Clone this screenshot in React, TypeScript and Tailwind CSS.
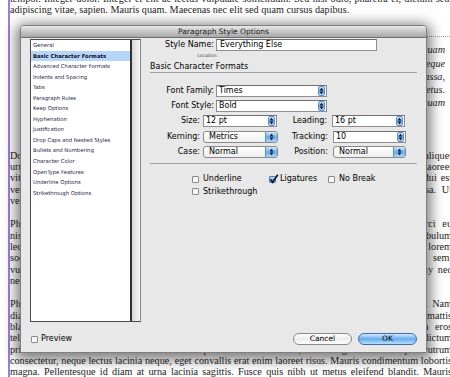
import React from "react";

const p0 = [
  "tempor. Integer dolor. Integer et elit ac lectus vulputate sollicitudin. Sed nisl odio, pharetra et, dictum sed,",
  "adipiscing vitae, sapien. Mauris quam. Maecenas nec elit sed quam cursus dapibus.",
];

const quote = [
  "Integer tincidunt ante sed lorem. Nulla facilisi. Sed ullamcorper lacus vel quam",
  "commodo, sit amet scelerisque lectus congue. Aenean condimentum felis sed neque",
  "Donec vitae felis. Aliquam vel lectus. Integer fringilla, urna in egestas massa,",
  "venenatis felis turpis sed ligula. Maecenas elementum porta lacus. Ut id metus.",
  "Quisque pharetra arcu sit amet orci. Nulla et tellus in nisl auctor aliquam quam",
];

const p1 = [
  "Donec ut est in lectus consequat consequat. Etiam eget dui. Aliquam erat volutpat. Sed at lorem aliquet",
  "urna nec lectus tincidunt dapibus. Praesent vel sapien sed dolor ultrices egestas vitae et laoreet",
  "vitae velit. Nam convallis tempus odio, eu fermentum risus vulputate ut. Suspendisse nec mollis dui est",
  "venenatis mi. In hac habitasse platea dictumst. Proin vel lorem ac tellus ornare feugiat massa. Ut",
  "vel nibh. Fusce sit amet diam.",
];

const p2 = [
  "Phasellus ultrices nulla quis nibh. Quisque a lectus. Donec consectetuer ligula vulputate orci eu",
  "nisi. Sed adipiscing ornare risus. Morbi est est, blandit sit amet, sagittis vel, euismod vestibulum",
  "lectus. Cras ornare tristique elit. Vivamus vestibulum nulla nec ante. Praesent placerat risus lorem",
  "sociis natoque penatibus et magnis dis parturient montes, nascetur ridiculus mus. Aliquam in sem,",
  "vulputate vitae, pretium mattis, nunc. Mauris eget neque at sem venenatis eleifend. Ut nonummy nec",
  "neque. Fusce mauris.",
];

const p3 = [
  "Phasellus pede arcu, dapibus eu, fermentum et, dapibus sed, urna. Morbi interdum mollis sapien. Nam",
  "diam. Sed vel erat. Curabitur non ipsum in dolor adipiscing semper. Praesent lacinia mauris mattis",
  "blandit dolor. Aliquam feugiat tortor vitae arcu. Vestibulum ante ipsum, suscipit et, fringilla eros",
  "tellus. Etiam ut sapien ac nisl accumsan feugiat. Aenean vel lorem quis dui tempus dictum",
  "primis in faucibus orci luctus et ultrices posuere cubilia curae; Nunc eget enim semper rutrum",
  "consectetur, neque lectus lacinia neque, eget convallis erat enim laoreet risus. Mauris condimentum lobortis",
  "magna. Pellentesque id diam at urna lacinia sagittis. Fusce quis nibh ut metus eleifend blandit. Mauris tempor",
];

const sections = [
  "General",
  "Basic Character Formats",
  "Advanced Character Formats",
  "Indents and Spacing",
  "Tabs",
  "Paragraph Rules",
  "Keep Options",
  "Hyphenation",
  "Justification",
  "Drop Caps and Nested Styles",
  "Bullets and Numbering",
  "Character Color",
  "OpenType Features",
  "Underline Options",
  "Strikethrough Options",
];

function Para({ lines, last = true }: { lines: string[]; last?: boolean }) {
  return (
    <>
      {lines.map((l, i) => (
        <div
          key={i}
          className={`h-[11.4px] overflow-hidden ${
            i < lines.length - 1 || !last ? "text-justify [text-align-last:justify]" : ""
          }`}
        >
          {l}
        </div>
      ))}
    </>
  );
}

function Page() {
  return (
    <div className="ml-[8px] w-[444px] border-l-2 border-[#9c80dc] font-['Liberation_Serif',serif] text-[10.2px] leading-[11.4px] text-[#1e1e1e]">
      <div className="-mt-[7px]">
        <Para lines={p0} />
      </div>
      <div className="mt-[27.6px] pl-[36px] pr-[7px] italic">
        {quote.map((l, i) => (
          <div key={i} className="h-[13.25px] leading-[13.25px] overflow-hidden text-justify [text-align-last:justify]">
            {l}
          </div>
        ))}
      </div>
      <div className="mt-[40px]">
        <Para lines={p1} />
      </div>
      <div className="mt-[11.6px]">
        <Para lines={p2} />
      </div>
      <div className="mt-[11.6px]">
        <Para lines={p3} last={false} />
      </div>
    </div>
  );
}

function Arrows() {
  return (
    <svg width="5" height="8" viewBox="0 0 5 8">
      <path d="M0.6 3.4L2.5 0.7L4.4 3.4Z M0.6 4.6L2.5 7.3L4.4 4.6Z" fill="#111" />
    </svg>
  );
}

function Menu({ value, w }: { value: string; w: string }) {
  return (
    <div className={`${w} h-[12px] flex items-center bg-white border border-[#8e8e8e] border-t-[#6f6f6f]`}>
      <span className="pl-[2px] flex-1 leading-none">{value}</span>
      <span className="mr-[1px] w-[7px] h-[10px] rounded-[2px] flex items-center justify-center bg-gradient-to-b from-[#d3e8fb] via-[#6aaef0] to-[#a9d2f7] border border-[#5b8fcf]">
        <Arrows />
      </span>
    </div>
  );
}

function Popup({ value, w }: { value: string; w: string }) {
  return (
    <div className={`${w} h-[12px] flex items-center rounded-[3px] bg-gradient-to-b from-white to-[#eeeeee] border border-[#8a8a8a] overflow-hidden`}>
      <span className="pl-[5px] flex-1 leading-none">{value}</span>
      <span className="w-[12px] h-full flex items-center justify-center bg-gradient-to-b from-[#d3e8fb] via-[#64a9ee] to-[#a9d2f7] border-l border-[#5b8fcf]">
        <Arrows />
      </span>
    </div>
  );
}

function Check({ on }: { on?: boolean }) {
  return (
    <span
      className={`relative shrink-0 w-[7px] h-[7px] rounded-[1px] border ${
        on
          ? "border-[#4f7fbf] bg-gradient-to-b from-[#cfe5fb] via-[#6aaef0] to-[#b0d6f8]"
          : "border-[#8a8a8a] bg-gradient-to-b from-[#f2f2f2] to-white"
      }`}
    >
      {on && (
        <svg className="absolute -left-[1px] -top-[3px]" width="10" height="10" viewBox="0 0 10 10">
          <path d="M1.5 5.5L3.6 8.3L8.8 0.8" fill="none" stroke="#111" strokeWidth="1.6" />
        </svg>
      )}
    </span>
  );
}

function StyleList() {
  return (
    <div className="w-[111px] h-[283px] flex border border-[#4a4a4a] border-r-[#8a8a8a]">
      <div className="flex-1 bg-white border-r-2 border-[#333]">
        {sections.map((s) => (
          <div
            key={s}
            className={`h-[10.55px] leading-[10.55px] pl-[2px] text-[5.3px] whitespace-nowrap ${
              s === "Basic Character Formats" ? "bg-[#b7d6f6] text-[#0d0d30] font-bold" : "text-[#1b1b45]"
            }`}
          >
            {s}
          </div>
        ))}
      </div>
      <div className="w-[8px] bg-gradient-to-r from-[#d8d8d8] to-[#f7f7f7]" />
    </div>
  );
}

function Row({ left, leftField, right, rightField }: { left: string; leftField: React.ReactNode; right: string; rightField: React.ReactNode }) {
  return (
    <div className="flex items-center h-[12px]">
      <span className="w-[50px] text-right">{left}</span>
      <span className="ml-[3px]">{leftField}</span>
      <span className="w-[50px] text-right">{right}</span>
      <span className="ml-[5px]">{rightField}</span>
    </div>
  );
}

function Dialog() {
  return (
    <div className="absolute left-[20px] top-[25px] w-[407px] h-[328px] flex flex-col bg-[#e8e8e8] border border-[#7e7e7e] rounded-t-[4px] shadow-[0_3px_13px_4px_rgba(0,0,0,0.5)] font-['DejaVu_Sans',sans-serif] text-[8px] leading-none text-black">
      <div className="h-[12px] shrink-0 flex items-center justify-center rounded-t-[3px] border-b border-[#6e6e6e] bg-gradient-to-b from-[#e9e9e9] to-[#a7a7a7] text-[7.5px] text-[#1a1a1a]">
        Paragraph Style Options
      </div>

      <div className="flex pl-[9px] pt-[1px]">
        <StyleList />

        <div className="ml-[9px] w-[267px] flex flex-col">
          <div className="flex items-center h-[12px]">
            <span className="w-[64px] text-right">Style Name:</span>
            <div className="ml-[2px] w-[161px] h-[12px] flex items-center bg-white border border-[#8e8e8e] border-t-[#6a6a6a] pl-[3px]">
              Everything Else
            </div>
          </div>
          <div className="h-[10px] flex items-center">
            <span className="w-[68px] text-right text-[4.5px] text-[#444]">Location:</span>
          </div>
          <div className="h-[12px] flex items-center border-b border-[#a0a0a0]">Basic Character Formats</div>

          <div className="mt-[12px] flex items-center h-[12px]">
            <span className="w-[64px] text-right">Font Family:</span>
            <span className="ml-[2px]">
              <Menu value="Times" w="w-[111px]" />
            </span>
          </div>
          <div className="mt-[3px] flex items-center h-[12px]">
            <span className="w-[64px] text-right">Font Style:</span>
            <span className="ml-[2px]">
              <Menu value="Bold" w="w-[111px]" />
            </span>
          </div>

          <div className="mt-[3px]">
            <Row left="Size:" leftField={<Menu value="12 pt" w="w-[74px]" />} right="Leading:" rightField={<Menu value="16 pt" w="w-[73px]" />} />
          </div>
          <div className="mt-[3.5px]">
            <Row left="Kerning:" leftField={<Popup value="Metrics" w="w-[75px]" />} right="Tracking:" rightField={<Menu value="10" w="w-[73px]" />} />
          </div>
          <div className="mt-[3.5px]">
            <Row left="Case:" leftField={<Popup value="Normal" w="w-[75px]" />} right="Position:" rightField={<Popup value="Normal" w="w-[73px]" />} />
          </div>

          <div className="mt-[5px] border-t border-[#a0a0a0]" />

          <div className="mt-[10px] h-[10px] flex items-center pl-[42px]">
            <div className="w-[77px] flex items-center gap-[4px]">
              <Check />
              <span>Underline</span>
            </div>
            <div className="w-[59px] flex items-center gap-[4px]">
              <Check on />
              <span>Ligatures</span>
            </div>
            <div className="flex items-center gap-[4px]">
              <Check />
              <span>No Break</span>
            </div>
          </div>
          <div className="mt-[2.5px] h-[10px] flex items-center pl-[42px] gap-[4px]">
            <Check />
            <span>Strikethrough</span>
          </div>
        </div>
      </div>

      <div className="mt-[11px] h-[12px] flex items-center pl-[10px] pr-[9px]">
        <Check />
        <span className="ml-[3px]">Preview</span>
        <div className="ml-auto flex gap-[6px]">
          <div className="w-[59px] h-[12px] rounded-full flex items-center justify-center border border-[#8a8a8a] bg-gradient-to-b from-white via-[#ececec] to-white text-[7.5px]">
            Cancel
          </div>
          <div className="w-[59px] h-[12px] rounded-full flex items-center justify-center border border-[#3f6fae] bg-gradient-to-b from-[#d4e9fc] via-[#68acef] to-[#b9ddfb] text-[7.5px]">
            OK
          </div>
        </div>
      </div>
    </div>
  );
}

export default function App() {
  return (
    <div className="relative w-[450px] h-[377px] overflow-hidden bg-white">
      <Page />
      <div className="absolute left-[427px] top-[36px] w-[23px] border-t border-dotted border-[#9a9a9a]" />
      <Dialog />
    </div>
  );
}
